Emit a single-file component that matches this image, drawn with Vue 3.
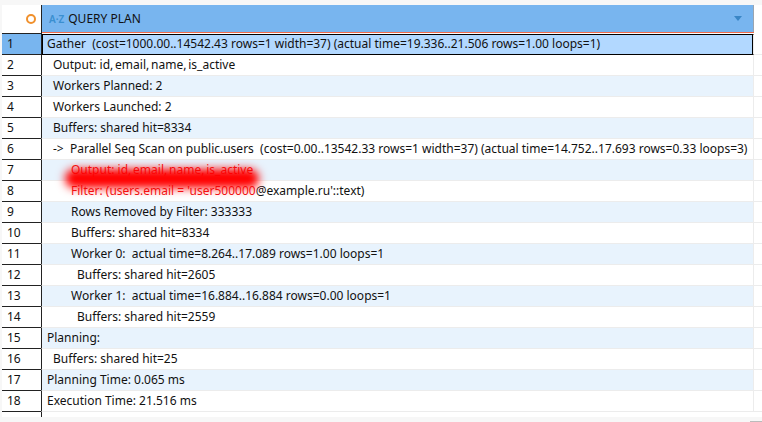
<template>
  <div class="page">
    <div class="grid">
      <div class="head-row">
        <div class="corner"><span class="ring"></span></div>
        <div class="col-head">
          <div class="col-head-top">
            <span class="az">A·Z</span>
            <span class="col-title">QUERY PLAN</span>
            <span class="sort-arrow"></span>
          </div>
          <div class="sort-line"></div>
        </div>
      </div>
      <div class="body">
        <div
          v-for="(line, i) in lines"
          :key="i"
          class="row"
          :class="{ selected: i === 0, odd: i % 2 === 0 }"
        >
          <div class="num">{{ i + 1 }}</div>
          <div class="cell" :style="{ paddingLeft: 5 + line.indent + 'px' }"><span v-if="line.red" class="red">{{ line.red }}</span>{{ line.text }}<span v-if="line.tail" class="tight" :class="{ red: line.red }">{{ line.tail }}</span></div>
          <div class="gutter"></div>
        </div>
        <div class="smear"></div>
      </div>
      <div class="tail"></div>
    </div>
    <div class="scroll-edge"></div>
  </div>
</template>

<script setup>
const lines = [
  { indent: 0, text: 'Gather  (cost=1000.00..14542.43 rows=1 width=37) (actual time=19.336..21.506 rows=1.00 loops=1)' },
  { indent: 6, text: 'Output: ', tail: 'id, email, name, is_active' },
  { indent: 6, text: 'Workers Planned: 2' },
  { indent: 6, text: 'Workers Launched: 2' },
  { indent: 6, text: 'Buffers: shared hit=8334' },
  { indent: 6, text: '->  Parallel Seq Scan on public.users  (cost=0.00..13542.33 rows=1 width=37) (actual time=14.752..17.693 rows=0.33 loops=3)' },
  { indent: 24, red: 'Output: ', tail: 'id, email, name, is_active' },
  { indent: 24, red: "Filter: (users.email = 'user500000", text: "@example.ru'::text)" },
  { indent: 24, text: 'Rows Removed by Filter: 333333' },
  { indent: 24, text: 'Buffers: shared hit=8334' },
  { indent: 24, text: 'Worker 0:  actual time=8.264..17.089 rows=1.00 loops=1' },
  { indent: 30, text: 'Buffers: shared hit=2605' },
  { indent: 24, text: 'Worker 1:  actual time=16.884..16.884 rows=0.00 loops=1' },
  { indent: 30, text: 'Buffers: shared hit=2559' },
  { indent: 0, text: 'Planning:' },
  { indent: 6, text: 'Buffers: shared hit=25' },
  { indent: 0, text: 'Planning Time: 0.065 ms' },
  { indent: 0, text: 'Execution Time: 21.516 ms' }
]
</script>

<style scoped>
.page {
  position: relative;
  width: 762px;
  height: 422px;
  overflow: hidden;
  background: #f7f7f7;
  padding: 5px 0 0 2px;
  box-sizing: border-box;
  font-family: "Noto Sans", sans-serif;
  font-size: 12px;
  color: #111;
}

.grid {
  background: #fff;
}

.head-row {
  display: flex;
  height: 29px;
}

.corner {
  width: 39px;
  display: flex;
  justify-content: flex-end;
  align-items: flex-start;
  padding: 9px 5px 0 0;
  box-sizing: border-box;
  background: #fff;
  border-bottom: 1px solid #222;
}

.ring {
  width: 10px;
  height: 10px;
  box-sizing: border-box;
  border: 2px solid #f0902c;
  border-radius: 50%;
}

.col-head {
  width: 713px;
  border-left: 1px solid #222;
  box-sizing: border-box;
}

.col-head-top {
  height: 27px;
  display: flex;
  align-items: center;
  background: #78b5ef;
  border-right: 1px solid #9aa5b0;
  padding: 0 11px 0 7px;
}

.sort-line {
  height: 1px;
  background: #f0694a;
}

.az {
  color: #3a8fd0;
  font-size: 10px;
  font-weight: 600;
  margin-right: 4px;
}

.col-title {
  flex: 1;
}

.sort-arrow {
  width: 0;
  height: 0;
  border-left: 4.5px solid transparent;
  border-right: 4.5px solid transparent;
  border-top: 5px solid #3a86c6;
}

.body {
  position: relative;
}

.row {
  display: flex;
  height: 21px;
}

.num {
  width: 39px;
  padding-left: 5px;
  box-sizing: border-box;
  line-height: 20px;
  background: #fff;
  border-bottom: 1px solid #222;
}

.cell {
  width: 713px;
  box-sizing: border-box;
  line-height: 20px;
  white-space: pre;
  background: #fff;
  border-left: 1px solid #222;
  border-right: 1px solid #ececec;
  border-bottom: 1px solid #ececec;
}

.row.odd .cell {
  background: #e8f3fd;
}

.tight {
  word-spacing: -1.3px;
}

.red {
  color: #f01414;
}

.gutter {
  flex: 1;
  border-bottom: 1px solid #ececec;
}

.row.selected .num {
  background: #78b5ef;
}

.row.selected .cell {
  background: #b2d8ff;
  border-top: 1px solid #000;
  border-bottom: 1px solid #000;
  box-shadow: inset 1px 0 0 #000, inset -1px 0 0 #000;
  line-height: 18px;
}

.smear {
  position: absolute;
  left: 67px;
  top: 139px;
  width: 186px;
  height: 11px;
  border-radius: 7px;
  background: #ff0000;
  box-shadow: 0 0 6px 4px #ff0000;
  filter: blur(3px);
}

.tail {
  width: 40px;
  height: 5px;
  box-sizing: border-box;
  border-right: 1px solid #222;
}

.scroll-edge {
  position: absolute;
  right: 0;
  bottom: 0;
  width: 12px;
  height: 1px;
  background: #bbb;
}
</style>
